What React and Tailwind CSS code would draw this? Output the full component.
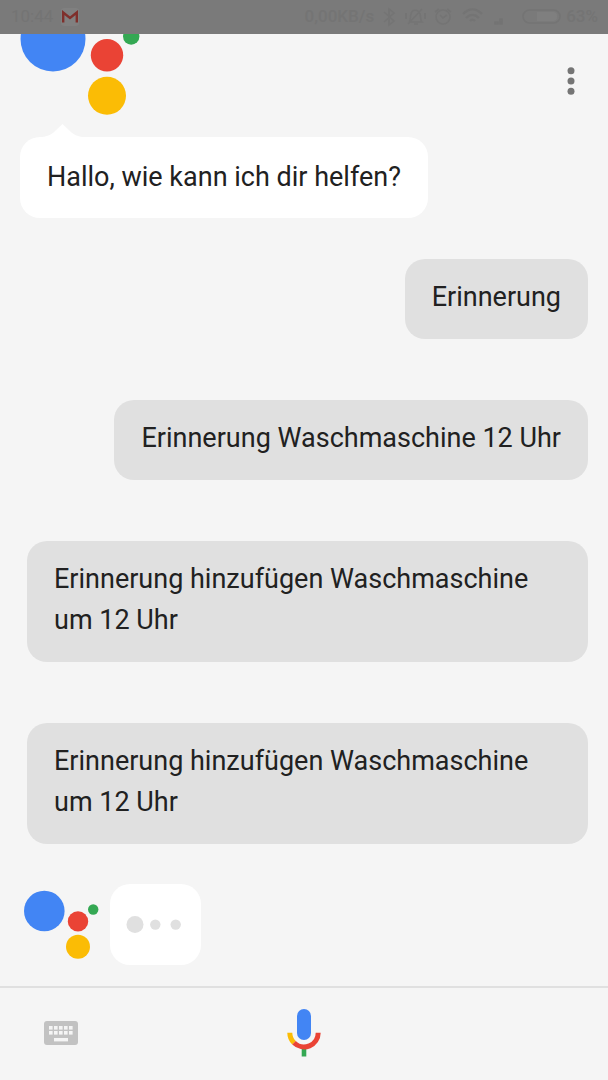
const messages = [
  { id: 1, text: "Erinnerung" },
  { id: 2, text: "Erinnerung Waschmaschine 12 Uhr" },
  { id: 3, text: "Erinnerung hinzufügen Waschmaschine um 12 Uhr" },
  { id: 4, text: "Erinnerung hinzufügen Waschmaschine um 12 Uhr" },
];

const StatusBar = () => {
  return (
    <header className="flex h-[34px] items-center justify-between bg-[#7a7a7a] pl-[11px] pr-[10px] text-[17px] font-medium text-[#747474]">
      <div className="flex items-center gap-2">
        <span className="font-normal">10:44</span>
        <svg width="18" height="18" viewBox="0 0 18 18" aria-label="Gmail">
          <rect width="18" height="18" rx="3" fill="#808080" />
          <path
            d="M2.200 14.500V4.500L9 10l6.800-5.500v10"
            fill="none"
            stroke="#7f2f2b"
            strokeWidth="2.400"
          />
        </svg>
      </div>
      <div className="flex items-center">
        <span>0,00KB/s</span>
        <svg
          width="188"
          height="20"
          viewBox="0 0 188 20"
          fill="none"
          stroke="currentColor"
          strokeWidth="1.600"
          aria-hidden="true"
        >
          <path d="M10 5l10 9-5 4V2l5 4-10 9" />
          <path d="M36 15h12c-2-2-1-5-2-8-2-5-8-5-9 0-1 3 0 6-2 8M40 17h4M34 17L48 2M32 6v6M51 6v6" />
          <circle cx="69" cy="10" r="7" />
          <path d="M66 8l3 3 4-3M61 5l4-3M77 5l-4-3" />
          <path d="M89 7c6-6 13-6 19 0M92 11c4-4 9-4 13 0M96 14c2-2 3-2 5 0" strokeWidth="2.400" />
          <path d="M121 17v-2h3v2zM126 17v-5h2v5z" fill="currentColor" />
          <rect x="149" y="3" width="37" height="13" rx="6.500" />
          <path d="M163 5h16a4 4 0 0 1 4 4v1a4 4 0 0 1-4 4h-16z" fill="#7f7f7f" stroke="none" />
        </svg>
        <span className="ml-1">63%</span>
      </div>
    </header>
  );
};

const AssistantLogo = () => {
  return (
    <svg width="76" height="70" viewBox="0 0 76 70" aria-label="Assistant">
      <circle cx="20.3" cy="21" r="20.3" fill="#4285f4" />
      <circle cx="54" cy="31.4" r="10.2" fill="#ea4335" />
      <circle cx="54" cy="56.7" r="12" fill="#fbbc05" />
      <circle cx="69.2" cy="19.5" r="5.2" fill="#34a853" />
    </svg>
  );
};

const UserBubble = ({ text }) => {
  return (
    <p className="rounded-[20px] bg-[#e0e0e0] px-[27px] pt-[18px] pb-[21px]">
      {text}
    </p>
  );
};

const App = () => {
  return (
    <div className="flex min-h-screen flex-col bg-[#f5f5f5] font-['Roboto',sans-serif] text-[#212121]">
      <StatusBar />

      <main className="flex flex-1 flex-col pb-5 text-[27px] leading-[41px]">
        <div className="flex items-start justify-between px-5">
          {/* top of the logo is scrolled under the status bar */}
          <svg width="120" height="103" viewBox="0 0 120 103" aria-label="Assistant">
            <circle cx="33" cy="5" r="32.5" fill="#4285f4" />
            <circle cx="87" cy="21.3" r="16.2" fill="#ea4335" />
            <circle cx="87" cy="61.8" r="19" fill="#fbbc05" />
            <circle cx="111.2" cy="2.5" r="8.2" fill="#34a853" />
          </svg>
          <button className="mt-8 px-3" aria-label="Menü">
            <svg width="10" height="30" viewBox="0 0 10 30" fill="#757575">
              <circle cx="5" cy="4.7" r="3.5" />
              <circle cx="5" cy="15" r="3.5" />
              <circle cx="5" cy="25.2" r="3.5" />
            </svg>
          </button>
        </div>

        <div className="relative ml-5 self-start rounded-[20px] bg-white px-[27px] py-5">
          <svg
            className="absolute -top-[13px] left-[22px]"
            width="41"
            height="14"
            viewBox="0 0 41 14"
            aria-hidden="true"
          >
            <path
              d="M0 13C6 12.500 9 10.500 12 8L20.500 0L29 8C32 10.500 35 12.500 41 13V14H0z"
              fill="#fff"
            />
          </svg>
          <p>Hallo, wie kann ich dir helfen?</p>
        </div>

        <div className="mt-[41px] flex flex-col items-end gap-[61px] pr-5 pl-[27px]">
          {messages.map((message) => (
            <UserBubble key={message.id} text={message.text} />
          ))}
        </div>

        <div className="mt-10 flex items-start gap-[10px] pl-6">
          <div className="pt-[6px]">
            <AssistantLogo />
          </div>
          <div className="rounded-[20px] bg-white">
            <svg width="91" height="81" viewBox="0 0 91 81" fill="#e0e0e0" aria-label="Schreibt">
              <circle cx="25" cy="40.6" r="8.5" />
              <circle cx="45.3" cy="40.6" r="5.2" />
              <circle cx="65.7" cy="40.6" r="5.2" />
            </svg>
          </div>
        </div>
      </main>

      <footer className="grid h-[94px] grid-cols-3 items-center border-t-2 border-[#e0e0e0] px-11 pb-[3px]">
        <button className="justify-self-start" aria-label="Tastatur">
          <svg width="34" height="24" viewBox="0 0 34 24" fill="#f5f5f5">
            <rect width="34" height="24" rx="3" fill="#c2c2c2" />
            {[5, 10, 15, 20, 25].map((x) => (
              <g key={x}>
                <rect x={x} y="5" width="3.6" height="3.6" />
                <rect x={x} y="10" width="3.6" height="3.6" />
              </g>
            ))}
            <rect x="10" y="17" width="14" height="3.4" />
          </svg>
        </button>
        <button className="justify-self-center" aria-label="Spracheingabe">
          <svg width="34" height="48" viewBox="0 0 34 48" fill="none">
            <rect x="10" y="0" width="14" height="31" rx="7" fill="#4285f4" />
            <path d="M17 40v7.500" stroke="#34a853" strokeWidth="4.6" />
            <path d="M2.800 23.700A14.200 14.200 0 0 0 7 33.800" stroke="#fbbc05" strokeWidth="5" />
            <path d="M7 33.800A14.200 14.200 0 0 0 31.200 23.700" stroke="#ea4335" strokeWidth="5" />
          </svg>
        </button>
      </footer>
    </div>
  );
};

export default App;
